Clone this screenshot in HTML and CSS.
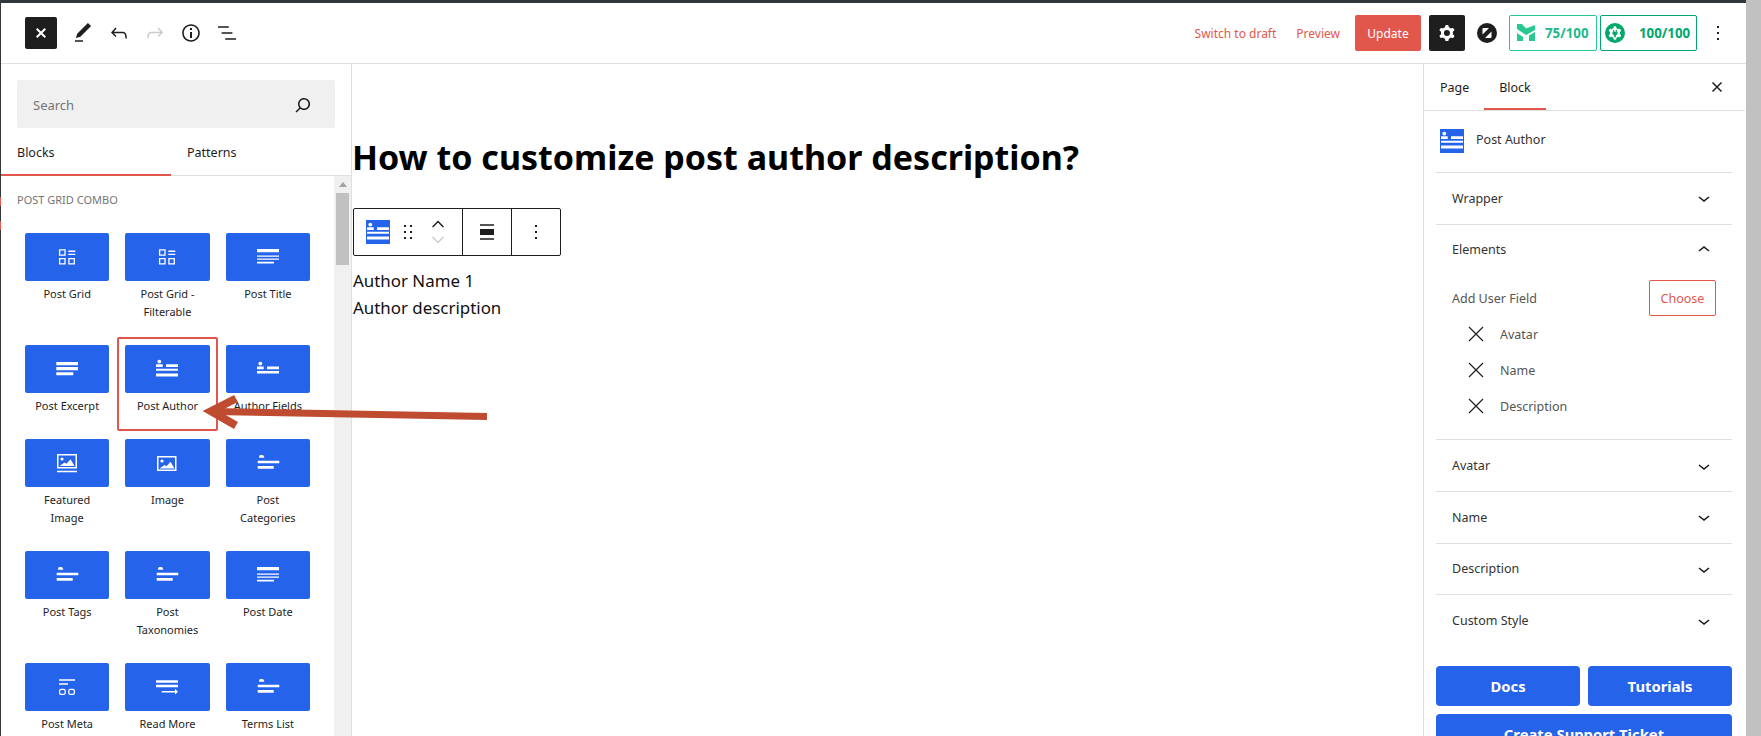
FILE: index.html
```html
<!DOCTYPE html>
<html lang="en">
<head>
    <meta charset="UTF-8">
    <meta name="viewport" content="width=device-width, initial-scale=1.0">
    <title>How to customize post author description?</title>
    <link rel="stylesheet" href="styles.css">
</head>
<body>

<svg class="sprite" width="0" height="0">
    <symbol id="i-grid" viewBox="0 0 24 24">
        <path fill="none" stroke="#fff" stroke-width="1.3" d="M4.6 4.9h5.4v5.2H4.6zM4.6 13.6h5.4v5.2H4.6zM13.9 13.6h5.4v5.2h-5.4z"/>
        <path fill="#fff" d="M13.3 5.6h7v1.3h-7zM13.3 8.8h7v1.3h-7z"/>
    </symbol>
    <symbol id="i-title" viewBox="0 0 24 24">
        <path fill="#fff" d="M1 4h22v3.2H1zM1 10.4h22v1.3H1zM1 13.4h22v1.3H1zM1 16.8h17v1.8H1z"/>
    </symbol>
    <symbol id="i-excerpt" viewBox="0 0 24 24">
        <path fill="#fff" d="M1.3 5h21.7v3.2H1.3zM1.3 10h21.7v3.2H1.3zM1.3 15.2h17v3H1.3z"/>
    </symbol>
    <symbol id="i-author" viewBox="0 0 24 24">
        <circle fill="#fff" cx="4.3" cy="4.6" r="1.9"/>
        <path fill="#fff" d="M1 7.2h6.700V10H1zM11 7.300h12V10H11zM1 11.700h22v2H1zM1 16.400h22v3H1z"/>
    </symbol>
    <symbol id="i-fields" viewBox="0 0 24 24">
        <circle fill="#fff" cx="4.3" cy="6.600" r="1.9"/>
        <path fill="#fff" d="M1 9.400h6.700v2.800H1zM11 9.500h12v2.700H11zM1 14h22v2.600H1z"/>
    </symbol>
    <symbol id="i-featured" viewBox="0 0 24 24">
        <path fill="#fff" fill-rule="evenodd" d="M2 3h20v14.400H2zM3.500 4.500v11.400h17V4.500z"/>
        <circle fill="#fff" cx="7" cy="8" r="1.600"/>
        <path fill="#fff" d="M4.500 15l5-3.500 2 1.300 4-4.500 4 6.700zM2 19.700h20v1.600H2z"/>
    </symbol>
    <symbol id="i-image" viewBox="0 0 24 24">
        <path fill="#fff" fill-rule="evenodd" d="M2 5h19.500v15H2zM3.500 6.500v12h16.500v-12z"/>
        <circle fill="#fff" cx="7" cy="10" r="1.600"/>
        <path fill="#fff" d="M4.500 17.500l5-3.500 2 1.300 4-4.500 4 6.700z"/>
    </symbol>
    <symbol id="i-terms" viewBox="0 0 24 24">
        <path fill="#fff" d="M2.800 6.700l1-2.700h3.200l1.500 2.700zM1.700 9.700h21.600v2.600H1.700zM1.700 15h16v2.700h-16z"/>
    </symbol>
    <symbol id="i-meta" viewBox="0 0 24 24">
        <path fill="#fff" d="M4 4.300h16v1.400H4zM4 8.300h9v1.400H4z"/>
        <rect x="4.600" y="14.400" width="5.600" height="5" rx="1.600" fill="none" stroke="#fff" stroke-width="1.300"/>
        <rect x="13.800" y="14.400" width="5.600" height="5" rx="1.600" fill="none" stroke="#fff" stroke-width="1.300"/>
    </symbol>
    <symbol id="i-more" viewBox="0 0 24 24">
        <path fill="#fff" d="M1 5.300h22v2.400H1zM1 9.700h22v2.600H1zM6.700 16h13.300v1.500H6.700zM20 13.800l3 2.900-3 2.900z"/>
    </symbol>
    <symbol id="i-chevron-down" viewBox="0 0 24 24">
        <path d="M17.500 11.600L12 16l-5.500-4.400.9-1.200L12 14l4.500-3.600 1 1.200z"/>
    </symbol>
    <symbol id="i-chevron-up" viewBox="0 0 24 24">
        <path d="M6.500 12.400L12 8l5.500 4.400-.9 1.200L12 10l-4.500 3.600-1-1.200z"/>
    </symbol>
    <symbol id="i-kebab" viewBox="0 0 24 24">
        <path d="M13 19h-2v-2h2v2zm0-6h-2v-2h2v2zm0-6h-2V5h2v2z"/>
    </symbol>
    <symbol id="i-cross" viewBox="0 0 16 16">
        <path fill="none" stroke="#1e1e1e" stroke-width="1.200" d="M1 1l14 14M15 1L1 15"/>
    </symbol>
</svg>

<div class="app">
    <div class="editor">
        <header class="topbar">
            <div class="topbar-left">
                <button class="btn-close">
                    <svg width="10" height="10" viewBox="0 0 10 10"><path fill="none" stroke="#fff" stroke-width="2" d="M.7.7l8.600 8.600M9.300.7L.7 9.300"/></svg>
                </button>
                <svg class="tool" viewBox="0 0 24 24"><path d="M20.100 5.100L16.900 2 6.200 12.700l-1.300 4.400 4.500-1.300L20.100 5.100zM4 20.800h8v-1.500H4v1.500z"/></svg>
                <svg class="tool" viewBox="0 0 24 24"><path d="M18.300 11.700c-.6-.6-1.400-.9-2.300-.9H6.700l2.900-3.300-1.100-1-4.500 5L8.500 16l1-1-2.700-2.700H16c.5 0 .9.2 1.300.5 1 1 1 3.400 1 4.500v.3h1.500v-.2c0-1.500 0-4.300-1.500-5.700z"/></svg>
                <svg class="tool tool-off" viewBox="0 0 24 24"><path d="M15.600 6.500l-1.100 1 2.900 3.300H8c-.9 0-1.700.3-2.300.9-1.400 1.500-1.400 4.200-1.400 5.600v.2h1.500v-.3c0-1.100 0-3.500 1-4.500.3-.3.7-.5 1.300-.5h9.200L14.500 15l1.100 1.100 4.600-4.600-4.600-5z"/></svg>
                <svg class="tool" viewBox="0 0 24 24"><path d="M12 3.200c-4.800 0-8.800 3.900-8.800 8.800 0 4.800 3.900 8.800 8.800 8.800 4.800 0 8.800-3.900 8.800-8.800 0-4.800-4-8.800-8.800-8.800zm0 16c-4 0-7.200-3.300-7.200-7.200C4.800 8 8 4.800 12 4.800s7.200 3.300 7.200 7.200c0 4-3.200 7.200-7.200 7.200zM11 17h2v-6h-2v6zm0-8h2V7h-2v2z"/></svg>
                <svg class="tool" viewBox="0 0 24 24"><path d="M13.800 5.200H3v1.500h10.800V5.200zm-3.600 12v1.500H21v-1.500H10.200zm7.200-6H6.600v1.500h10.800v-1.500z"/></svg>
            </div>
            <div class="topbar-right">
                <a class="link-draft">Switch to draft</a>
                <a class="link-preview">Preview</a>
                <button class="btn-update">Update</button>
                <button class="btn-settings">
                    <svg width="24" height="24" viewBox="0 0 24 24" fill="#fff"><path fill-rule="evenodd" d="M10.289 4.836A1 1 0 0111.275 4h1.306a1 1 0 01.987.836l.244 1.466c.787.26 1.503.679 2.108 1.218l1.393-.522a1 1 0 011.216.437l.653 1.130a1 1 0 01-.23 1.273l-1.148.944a6.025 6.025 0 010 2.435l1.149.946a1 1 0 01.23 1.272l-.653 1.130a1 1 0 01-1.216.437l-1.394-.522c-.605.54-1.320.958-2.108 1.218l-.244 1.466a1 1 0 01-.987.836h-1.306a1 1 0 01-.986-.836l-.244-1.466a5.995 5.995 0 01-2.108-1.218l-1.394.522a1 1 0 01-1.217-.436l-.653-1.131a1 1 0 01.23-1.272l1.149-.946a6.026 6.026 0 010-2.435l-1.148-.944a1 1 0 01-.23-1.272l.653-1.131a1 1 0 011.217-.437l1.393.522a5.994 5.994 0 012.108-1.218l.244-1.466zM14.929 12a3 3 0 11-6 0 3 3 0 016 0z"/></svg>
                </button>
                <svg class="logo-z" width="20" height="20" viewBox="0 0 20 20">
                    <circle cx="10" cy="10" r="10" fill="#1e1e1e"/>
                    <path fill="#fff" d="M5.500 11.500V6q0-1 1-1H12zM14.500 8.500V14q0 1-1 1H8z"/>
                </svg>
                <div class="badge badge-m">
                    <svg width="18" height="18" viewBox="0 0 18 18" fill="#27c98f"><path d="M0 0h5l4 4.500L18 1v5l-9 5-9-6zM0 9l6 4v4H0zM12 11.500L18 8v9h-6z"/></svg>
                    <span>75/100</span>
                </div>
                <div class="badge badge-g">
                    <svg width="20" height="20" viewBox="0 0 24 24">
                        <circle cx="12" cy="12" r="12" fill="#00a86b"/>
                        <path fill="#fff" d="M10.289 4.836A1 1 0 0111.275 4h1.306a1 1 0 01.987.836l.244 1.466c.787.26 1.503.679 2.108 1.218l1.393-.522a1 1 0 011.216.437l.653 1.130a1 1 0 01-.23 1.273l-1.148.944a6.025 6.025 0 010 2.435l1.149.946a1 1 0 01.23 1.272l-.653 1.130a1 1 0 01-1.216.437l-1.394-.522c-.605.54-1.320.958-2.108 1.218l-.244 1.466a1 1 0 01-.987.836h-1.306a1 1 0 01-.986-.836l-.244-1.466a5.995 5.995 0 01-2.108-1.218l-1.394.522a1 1 0 01-1.217-.436l-.653-1.131a1 1 0 01.23-1.272l1.149-.946a6.026 6.026 0 010-2.435l-1.148-.944a1 1 0 01-.23-1.272l.653-1.131a1 1 0 011.217-.437l1.393.522a5.994 5.994 0 012.108-1.218l.244-1.466z"/>
                        <path fill="#00a86b" d="M9.800 8h1.300v2.500h1.800V8h1.300v2.500h.8v2.700l-2 1.800V17h-2v-2l-2-1.800v-2.700h.8z"/>
                    </svg>
                    <span>100/100</span>
                </div>
                <svg class="tool kebab"><use href="#i-kebab"/></svg>
            </div>
        </header>

        <div class="workspace">
            <aside class="inserter">
                <div class="search">
                    <span>Search</span>
                    <svg width="24" height="24" viewBox="0 0 24 24"><path fill="#1e1e1e" d="M13 5c-3.300 0-6 2.700-6 6 0 1.400.5 2.700 1.300 3.700l-3.800 3.800 1.100 1.100 3.800-3.800c1 .8 2.300 1.300 3.700 1.300 3.300 0 6-2.700 6-6S16.300 5 13 5zm0 10.500c-2.500 0-4.500-2-4.500-4.500s2-4.500 4.500-4.500 4.500 2 4.500 4.500-2 4.500-4.500 4.500z"/></svg>
                </div>
                <div class="ins-tabs">
                    <div class="ins-tab active">Blocks</div>
                    <div class="ins-tab">Patterns</div>
                </div>
                <div class="ins-body">
                    <div class="block-list">
                        <div class="cat-title">POST GRID COMBO</div>
                        <div class="block-grid">
                            <div class="block-item"><div class="tile"><svg><use href="#i-grid"/></svg></div><div class="label">Post Grid</div></div>
                            <div class="block-item"><div class="tile"><svg><use href="#i-grid"/></svg></div><div class="label">Post Grid -<br>Filterable</div></div>
                            <div class="block-item"><div class="tile"><svg><use href="#i-title"/></svg></div><div class="label">Post Title</div></div>
                            <div class="block-item"><div class="tile"><svg><use href="#i-excerpt"/></svg></div><div class="label">Post Excerpt</div></div>
                            <div class="block-item marked"><div class="tile"><svg><use href="#i-author"/></svg></div><div class="label">Post Author</div></div>
                            <div class="block-item"><div class="tile"><svg><use href="#i-fields"/></svg></div><div class="label">Author Fields</div></div>
                            <div class="block-item"><div class="tile"><svg><use href="#i-featured"/></svg></div><div class="label">Featured<br>Image</div></div>
                            <div class="block-item"><div class="tile"><svg><use href="#i-image"/></svg></div><div class="label">Image</div></div>
                            <div class="block-item"><div class="tile"><svg><use href="#i-terms"/></svg></div><div class="label">Post<br>Categories</div></div>
                            <div class="block-item"><div class="tile"><svg><use href="#i-terms"/></svg></div><div class="label">Post Tags</div></div>
                            <div class="block-item"><div class="tile"><svg><use href="#i-terms"/></svg></div><div class="label">Post<br>Taxonomies</div></div>
                            <div class="block-item"><div class="tile"><svg><use href="#i-title"/></svg></div><div class="label">Post Date</div></div>
                            <div class="block-item"><div class="tile"><svg><use href="#i-meta"/></svg></div><div class="label">Post Meta</div></div>
                            <div class="block-item"><div class="tile"><svg><use href="#i-more"/></svg></div><div class="label">Read More</div></div>
                            <div class="block-item"><div class="tile"><svg><use href="#i-terms"/></svg></div><div class="label">Terms List</div></div>
                        </div>
                    </div>
                    <div class="ins-scroll">
                        <div class="ins-scroll-up"></div>
                        <div class="ins-scroll-thumb"></div>
                    </div>
                </div>
            </aside>

            <main class="canvas">
                <h1 class="post-title">How to customize post author description?</h1>
                <div class="block-toolbar">
                    <div class="tb-group tb-first">
                        <svg class="blue-icon"><use href="#i-author"/></svg>
                        <svg class="tb-drag" viewBox="0 0 24 24"><path d="M8 7h2V5H8v2zm0 6h2v-2H8v2zm0 6h2v-2H8v2zm6-14v2h2V5h-2zm0 8h2v-2h-2v2zm0 6h2v-2h-2v2z"/></svg>
                        <div class="tb-mover">
                            <svg class="mover-up" viewBox="0 0 12 8"><path fill="none" stroke="#1e1e1e" stroke-width="1.500" d="M.6 7L6 1.500 11.400 7"/></svg>
                            <svg class="mover-down" viewBox="0 0 12 8"><path fill="none" stroke="#ccc" stroke-width="1.500" d="M.6 1L6 6.500 11.400 1"/></svg>
                        </div>
                    </div>
                    <div class="tb-group tb-mid">
                        <svg viewBox="0 0 24 24"><path d="M5 15h14V9H5v6zm0 4.800h14v-1.500H5v1.500zM5 4.200v1.500h14V4.200H5z"/></svg>
                    </div>
                    <div class="tb-group tb-mid">
                        <svg><use href="#i-kebab"/></svg>
                    </div>
                </div>
                <div class="author-name">Author Name 1</div>
                <div class="author-desc">Author description</div>
            </main>

            <aside class="sidebar">
                <div class="side-tabs">
                    <div class="side-tab">Page</div>
                    <div class="side-tab active">Block</div>
                    <svg class="side-close" viewBox="0 0 10 10"><path fill="none" stroke="#1e1e1e" stroke-width="1.500" d="M.5.5l9 9M9.500.5l-9 9"/></svg>
                </div>
                <div class="side-inner">
                    <div class="block-card">
                        <svg class="blue-icon"><use href="#i-author"/></svg>
                        <span>Post Author</span>
                    </div>
                    <div class="panel"><div class="panel-head">Wrapper<svg><use href="#i-chevron-down"/></svg></div></div>
                    <div class="panel">
                        <div class="panel-head">Elements<svg><use href="#i-chevron-up"/></svg></div>
                        <div class="panel-body">
                            <div class="field-row">
                                <span>Add User Field</span>
                                <button class="btn-choose">Choose</button>
                            </div>
                            <div class="el-row"><svg><use href="#i-cross"/></svg><span>Avatar</span></div>
                            <div class="el-row"><svg><use href="#i-cross"/></svg><span>Name</span></div>
                            <div class="el-row"><svg><use href="#i-cross"/></svg><span>Description</span></div>
                        </div>
                    </div>
                    <div class="panel"><div class="panel-head">Avatar<svg><use href="#i-chevron-down"/></svg></div></div>
                    <div class="panel"><div class="panel-head">Name<svg><use href="#i-chevron-down"/></svg></div></div>
                    <div class="panel"><div class="panel-head">Description<svg><use href="#i-chevron-down"/></svg></div></div>
                    <div class="panel"><div class="panel-head">Custom Style<svg><use href="#i-chevron-down"/></svg></div></div>
                    <div class="help-btns">
                        <button class="btn-help">Docs</button>
                        <button class="btn-help">Tutorials</button>
                        <button class="btn-help btn-wide">Create Support Ticket</button>
                    </div>
                </div>
            </aside>
        </div>
    </div>
    <div class="page-scroll"></div>

    <!-- red ticks on the left edge of the window -->
    <div class="edge-mark edge-mark-1"></div>
    <div class="edge-mark edge-mark-2"></div>

    <!-- hand drawn arrow over the screenshot -->
    <svg class="arrow" width="300" height="50" viewBox="200 390 300 50">
        <path fill="none" stroke="#bf4b30" stroke-width="7" d="M212 411.500L487 416.500"/>
        <path fill="none" stroke="#bf4b30" stroke-width="8" d="M236 398.500L211 411.300l25 14.200"/>
    </svg>
</div>

</body>
</html>
```

FILE: styles.css
```css
:root{
    --blue: #2563eb;
    --red: #e2574c;
    --line: #e0e0e0;
    --ink: #1e1e1e;
}

*{
    box-sizing: border-box;
    font-family: "Noto Sans", sans-serif;
}

body{
    margin: 0;
    width: 1761px;
    height: 736px;
    overflow: hidden;
    background: #fff;
    color: var(--ink);
}

button{
    border: 0;
    padding: 0;
    cursor: pointer;
}

.sprite{
    display: block;
}

.app{
    position: relative;
    display: flex;
    height: 736px;
}

.editor{
    flex: 1;
    min-width: 0;
    display: flex;
    flex-direction: column;
    border-top: 3px solid #32373c;
    border-left: 1px solid #32373c;
}

.page-scroll{
    width: 15px;
    background: #c1c1c1;
}

.edge-mark{
    position: absolute;
    left: 0;
    width: 1px;
    height: 9px;
    background: var(--red);
}

.edge-mark-1{
    top: 197px;
}

.edge-mark-2{
    top: 221px;
}

/* top bar */
.topbar{
    height: 61px;
    flex: none;
    display: flex;
    align-items: center;
    justify-content: space-between;
    border-bottom: 1px solid var(--line);
    padding: 0 16px 1px 24px;
}

.topbar-left,.topbar-right{
    display: flex;
    align-items: center;
}

.btn-close{
    width: 32px;
    height: 32px;
    background: var(--ink);
    border-radius: 2px;
    display: flex;
    align-items: center;
    justify-content: center;
    margin-right: 14px;
}

.tool{
    width: 24px;
    height: 24px;
    margin-right: 12px;
    fill: var(--ink);
}

.tool-off{
    fill: #ccc;
}

.link-draft,.link-preview{
    font-size: 12px;
    padding-top: 2px;
    color: var(--red);
}

.link-draft{
    margin-right: 20px;
}

.link-preview{
    margin-right: 15px;
}

.btn-update{
    width: 66px;
    height: 36px;
    padding-top: 2px;
    background: var(--red);
    color: #fff;
    font-size: 12px;
    border-radius: 2px;
    margin-right: 8px;
}

.btn-settings{
    width: 36px;
    height: 36px;
    background: var(--ink);
    border-radius: 2px;
    display: flex;
    align-items: center;
    justify-content: center;
    margin-right: 12px;
}

.logo-z{
    margin-right: 12px;
}

.badge{
    height: 36px;
    display: flex;
    align-items: center;
    border-radius: 2px;
    font-size: 13.3px;
    font-weight: 700;
}

.badge-m{
    width: 88px;
    border: 1px solid #27c98f;
    color: #1fb98a;
    padding-left: 7px;
    gap: 10px;
    margin-right: 3px;
}

.badge-g{
    width: 97px;
    border: 1px solid #00a86b;
    color: #00a86b;
    padding-left: 4px;
    gap: 14px;
    margin-right: 9px;
}

.kebab{
    margin-right: 0;
}

/* columns */
.workspace{
    flex: 1;
    min-height: 0;
    display: flex;
}

.inserter{
    width: 351px;
    flex: none;
    display: flex;
    flex-direction: column;
    border-right: 1px solid var(--line);
}

.search{
    height: 48px;
    margin: 16px 16px 0;
    flex: none;
    background: #f0f0f0;
    border-radius: 2px;
    display: flex;
    align-items: center;
    justify-content: space-between;
    padding: 1px 20px 0 16px;
    font-size: 13px;
    color: #757575;
}

.ins-tabs{
    height: 48px;
    flex: none;
    display: flex;
    border-bottom: 1px solid var(--line);
}

.ins-tab{
    width: 170px;
    height: 48px;
    padding: 17px 0 0 16px;
    font-size: 12.5px;
    line-height: 16px;
}

.ins-tab.active{
    border-bottom: 2px solid var(--red);
}

.ins-body{
    flex: 1;
    min-height: 0;
    display: flex;
}

.block-list{
    flex: 1;
    min-width: 0;
    overflow: hidden;
}

.cat-title{
    padding: 16px 0 0 16px;
    font-size: 11px;
    line-height: 16px;
    color: #757575;
    margin-bottom: 25px;
}

.block-grid{
    width: 285px;
    margin-left: 24px;
    display: grid;
    grid-template-columns: repeat(3, 1fr);
    gap: 24px 16px;
}

.block-item{
    position: relative;
}

.block-item.marked::before{
    content: "";
    box-sizing: border-box;
    position: absolute;
    top: -8px;
    left: -8px;
    right: -8px;
    height: 94px;
    border: 2px solid var(--red);
    border-radius: 2px;
}

.tile{
    height: 48px;
    background: var(--blue);
    border-radius: 2px;
    display: flex;
    align-items: center;
    justify-content: center;
}

.tile svg{
    width: 24px;
    height: 24px;
}

.label{
    margin-top: 4px;
    font-size: 11px;
    line-height: 18px;
    text-align: center;
}

.ins-scroll{
    width: 17px;
    flex: none;
    background: #f0f0f0;
    padding: 0 2px;
}

.ins-scroll-up{
    width: 0;
    height: 0;
    margin: 6px auto 0;
    border: 4px solid transparent;
    border-top: 0;
    border-bottom: 5px solid #a3a3a3;
}

.ins-scroll-thumb{
    height: 72px;
    margin-top: 6px;
    background: #c1c1c1;
}

/* post canvas */
.canvas{
    flex: 1;
    min-width: 0;
    padding-top: 70px;
    padding-left: 1px;
}

.post-title{
    margin: 0 0 28px -1px;
    font-size: 34px;
    line-height: 46px;
    font-weight: 700;
    color: #000;
}

.block-toolbar{
    width: 208px;
    height: 48px;
    display: flex;
    border: 1px solid var(--ink);
    border-radius: 2px;
    margin-bottom: 11px;
}

.tb-group{
    display: flex;
    align-items: center;
    justify-content: center;
    border-right: 1px solid var(--ink);
}

.tb-group:last-child{
    border-right: 0;
    flex: 1;
}

.tb-first{
    width: 109px;
    justify-content: flex-start;
    padding-left: 12px;
}

.tb-mid{
    width: 49px;
}

.tb-group svg{
    width: 24px;
    height: 24px;
    fill: var(--ink);
}

.tb-group .tb-drag{
    margin-left: 6px;
}

.tb-mover{
    display: flex;
    flex-direction: column;
    align-items: center;
    gap: 8px;
    margin-left: 12px;
}

.tb-group .mover-up,.tb-group .mover-down{
    width: 12px;
    height: 8px;
}

.blue-icon{
    width: 24px;
    height: 24px;
    background: var(--blue);
    flex: none;
}

.author-name,.author-desc{
    font-size: 16.9px;
    line-height: 27px;
    color: #111;
}

/* settings sidebar */
.sidebar{
    width: 323px;
    flex: none;
    border-left: 1px solid var(--line);
    padding-right: 1px;
}

.side-tabs{
    height: 47px;
    display: flex;
    align-items: flex-start;
    border-bottom: 1px solid var(--line);
    padding-left: 16px;
    font-size: 12.5px;
}

.side-tab{
    width: 44px;
    height: 46px;
    padding-top: 15px;
    line-height: 18px;
}

.side-tab.active{
    width: 62px;
    text-align: center;
    border-bottom: 2px solid var(--red);
}

.side-close{
    width: 10px;
    height: 10px;
    margin: 18px 23px 0 auto;
}

.side-inner{
    padding: 0 13px 0 12px;
}

.block-card{
    height: 61px;
    display: flex;
    align-items: flex-start;
    gap: 12px;
    padding: 18px 4px 0;
    font-size: 12.5px;
    line-height: 18px;
    color: #333;
}

.block-card span{
    margin-top: 2px;
}

.panel{
    border-top: 1px solid var(--line);
}

.panel-head{
    height: 50.67px;
    display: flex;
    align-items: center;
    justify-content: space-between;
    padding: 0 16px;
    font-size: 12.5px;
    color: #333;
}

.panel-head svg{
    width: 24px;
    height: 24px;
    fill: var(--ink);
}

.panel-body{
    padding: 5px 16px 15px;
    font-size: 12.5px;
    color: #555;
}

.field-row{
    height: 36px;
    display: flex;
    align-items: center;
    justify-content: space-between;
}

.btn-choose{
    width: 67px;
    height: 36px;
    background: #fff;
    border: 1px solid var(--red);
    border-radius: 2px;
    color: var(--red);
    font-size: 12.5px;
}

.el-row{
    height: 36px;
    display: flex;
    align-items: center;
    gap: 16px;
    padding-left: 16px;
}

.el-row svg{
    width: 16px;
    height: 16px;
}

.help-btns{
    display: grid;
    grid-template-columns: 1fr 1fr;
    gap: 8px;
    margin-top: 20px;
}

.btn-help{
    height: 40px;
    background: var(--blue);
    color: #fff;
    font-size: 14.8px;
    font-weight: 700;
    border-radius: 4px;
}

.btn-wide{
    grid-column: 1 / 3;
}

/* annotation */
.arrow{
    position: absolute;
    left: 200px;
    top: 390px;
}
```
